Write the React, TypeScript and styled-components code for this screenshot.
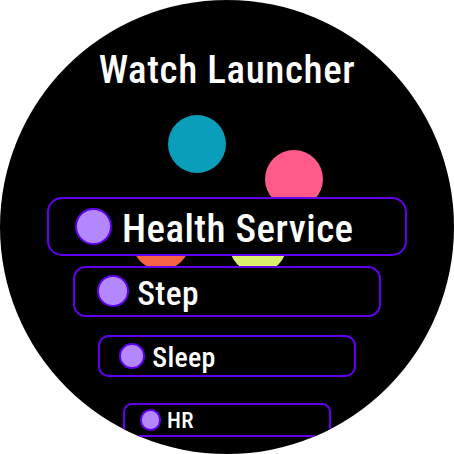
import React from "react";
import styled, { createGlobalStyle } from "styled-components";

const Global = createGlobalStyle`
  html, body { margin: 0; padding: 0; background: #ffffff; }
  body { font-family: Roboto, "Noto Sans", sans-serif; }
`;

const Watch = styled.div`
  position: relative;
  width: 454px;
  height: 454px;
  border-radius: 50%;
  background: #000000;
  overflow: hidden;
`;

const BubbleLayer = styled.div`
  position: absolute;
  inset: 0;
`;

const Bubble = styled.div<{ $x: number; $y: number; $color: string }>`
  position: absolute;
  left: ${(p) => p.$x - 29}px;
  top: ${(p) => p.$y - 29}px;
  width: 58px;
  height: 58px;
  border-radius: 50%;
  background: ${(p) => p.$color};
`;

const Content = styled.div`
  position: relative;
  display: flex;
  flex-direction: column;
  align-items: center;
  height: 437px;
  overflow: hidden;
`;

const Title = styled.h1`
  margin: 47px 0 0;
  font-family: Roboto, sans-serif;
  font-weight: 500;
  font-stretch: 85%;
  font-size: 39px;
  letter-spacing: 0.6px;
  line-height: 46px;
  color: #ffffff;
`;

const Cards = styled.div`
  display: flex;
  flex-direction: column;
  align-items: center;
  margin-top: 104px;
`;

const Card = styled.div<{ $s: number; $gap: number }>`
  box-sizing: border-box;
  flex-shrink: 0;
  display: flex;
  align-items: center;
  gap: ${(p) => 10 * p.$s}px;
  width: ${(p) => 360 * p.$s}px;
  height: ${(p) => 59 * p.$s}px;
  margin-top: ${(p) => p.$gap}px;
  padding-left: ${(p) => 26 * p.$s}px;
  border: 2px solid #6200ee;
  border-radius: ${(p) => 15 * p.$s}px;
  background: #000000;
`;

const Dot = styled.span<{ $s: number }>`
  box-sizing: border-box;
  flex-shrink: 0;
  width: ${(p) => 37 * p.$s}px;
  height: ${(p) => 37 * p.$s}px;
  border-radius: 50%;
  background: #b388ff;
  border: 2px solid #6200ee;
`;

const Label = styled.span<{ $s: number }>`
  font-family: Roboto, sans-serif;
  font-weight: 500;
  font-stretch: 85%;
  font-size: ${(p) => 39 * p.$s}px;
  letter-spacing: ${(p) => 0.45 * p.$s}px;
  line-height: 1;
  color: #ffffff;
  white-space: nowrap;
  padding-top: ${(p) => 6 * p.$s}px;
`;

const items = [
  { label: "Health Service", s: 1, gap: 0 },
  { label: "Step", s: 0.858, gap: 10 },
  { label: "Sleep", s: 0.717, gap: 18 },
  { label: "HR", s: 0.578, gap: 26 },
];

export default function App() {
  return (
    <>
      <Global />
      <Watch>
        <BubbleLayer>
          <Bubble $x={197} $y={144} $color="#0a9ebb" />
          <Bubble $x={294} $y={179} $color="#ff5a8a" />
          <Bubble $x={161} $y={241} $color="#f76345" />
          <Bubble $x={258} $y={244} $color="#d9ee6a" />
        </BubbleLayer>
        <Content>
          <Title>Watch Launcher</Title>
          <Cards>
            {items.map((it) => (
              <Card key={it.label} $s={it.s} $gap={it.gap}>
                <Dot $s={it.s} />
                <Label $s={it.s}>{it.label}</Label>
              </Card>
            ))}
          </Cards>
        </Content>
      </Watch>
    </>
  );
}
